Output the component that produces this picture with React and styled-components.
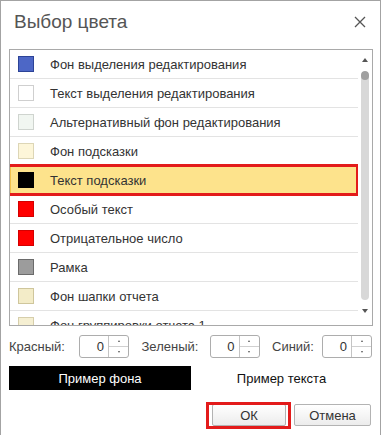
import React from "react";
import styled, { createGlobalStyle } from "styled-components";

const Global = createGlobalStyle`
  html, body { margin: 0; padding: 0; background: #fff; }
  body { font-family: Arial, "Liberation Sans", sans-serif; color: #333; }
`;

const Dialog = styled.div`
  width: 379px;
  height: 434px;
  border: 1px solid #a3a3a3;
  border-bottom: none;
  background: #fff;
  display: flex;
  flex-direction: column;
`;

const Header = styled.div`
  height: 48px;
  display: flex;
  align-items: flex-start;
  justify-content: space-between;
  padding: 0 14px 0 13px;
`;

const Title = styled.div`
  font-size: 19px;
  color: #555;
  margin-top: 10px;
`;

const Close = styled.svg`
  margin-top: 15px;
  width: 12px;
  height: 12px;
`;

const ListBox = styled.div`
  position: relative;
  margin: 0 7px 0 8px;
  height: 275px;
  border: 1px solid #a9a9a9;
  overflow: visible;
  display: flex;
`;

const Rows = styled.div`
  flex: 1;
  height: 275px;
  overflow: hidden;
`;

const Row = styled.div`
  position: relative;
  height: 28px;
  border-bottom: 1px solid #e3e3e3;
  display: flex;
  align-items: center;
  padding-left: 8px;
  font-size: 13px;
  color: #333;
  background: ${(p) => (p.$active ? "#fde38c" : "transparent")};
  box-shadow: ${(p) => (p.$active ? "inset 0 0 0 1px #f2c24a" : "none")};
`;

const Highlight = styled.div`
  position: absolute;
  left: -7px;
  right: -1px;
  top: -2px;
  bottom: -2px;
  border: 3px solid #e31b1b;
  pointer-events: none;
`;

const Swatch = styled.span`
  width: 14px;
  height: 14px;
  border: 1px solid ${(p) => p.$border};
  background: ${(p) => p.$fill};
  margin-right: 16px;
  flex: none;
`;

const Scroll = styled.div`
  width: 14px;
  display: flex;
  flex-direction: column;
  align-items: center;
  padding-top: 8px;
`;

const Arrow = styled.div`
  width: 0;
  height: 0;
  border-left: 3px solid transparent;
  border-right: 3px solid transparent;
  ${(p) =>
    p.$up
      ? "border-bottom: 4px solid #555;"
      : "border-top: 4px solid #555;"}
`;

const Track = styled.div`
  width: 8px;
  height: 229px;
  margin: 9px 0 9px;
  border-radius: 4px;
  background: #d8d8d8;
  overflow: hidden;
`;

const Thumb = styled.div`
  height: 9px;
  border-radius: 4px;
  background: #a0a0a0;
`;

const Controls = styled.div`
  display: flex;
  justify-content: space-between;
  margin: 9px 8px 0 8px;
`;

const Group = styled.div`
  width: ${(p) => p.$w}px;
  display: flex;
  align-items: center;
  justify-content: space-between;
  font-size: 13px;
  color: #444;
`;

const Spin = styled.div`
  width: 48px;
  height: 21px;
  border: 1px solid #adadad;
  border-radius: 3px;
  display: flex;
`;

const SpinValue = styled.div`
  flex: 1;
  text-align: right;
  padding-right: 4px;
  font-size: 13px;
  line-height: 21px;
  color: #333;
  border-right: 1px solid #c4c4c4;
`;

const SpinButtons = styled.div`
  width: 19px;
  display: flex;
  flex-direction: column;
`;

const SpinBtn = styled.div`
  flex: 1;
  display: flex;
  align-items: center;
  justify-content: center;
  & + & { border-top: 1px solid #d0d0d0; }
`;

const Tiny = styled.div`
  width: 0;
  height: 0;
  border-left: 1.5px solid transparent;
  border-right: 1.5px solid transparent;
  ${(p) =>
    p.$up ? "border-bottom: 2px solid #555;" : "border-top: 2px solid #555;"}
`;

const Samples = styled.div`
  display: flex;
  margin: 8px 8px 0 8px;
  height: 24px;
`;

const BgSample = styled.div`
  width: 182px;
  background: #000;
  color: #fff;
  font-size: 13px;
  display: flex;
  align-items: center;
  justify-content: center;
`;

const TextSample = styled.div`
  flex: 1;
  color: #111;
  font-size: 13px;
  display: flex;
  align-items: center;
  justify-content: center;
`;

const Footer = styled.div`
  display: flex;
  justify-content: flex-end;
  gap: 8px;
  margin: 14px 9px 0 0;
`;

const Button = styled.div`
  position: relative;
  width: ${(p) => p.$w}px;
  height: 20px;
  border: 1px solid #b3b3b3;
  border-radius: 2px;
  background: linear-gradient(#ffffff, #ececec);
  font-size: 13px;
  color: #333;
  display: flex;
  align-items: center;
  justify-content: center;
`;

const ButtonMark = styled.div`
  position: absolute;
  left: -7px;
  right: -6px;
  top: -3px;
  bottom: -4px;
  border: 3px solid #e31b1b;
`;

const items = [
  { t: "Фон выделения редактирования", f: "#4d67c6", b: "#2c4397" },
  { t: "Текст выделения редактирования", f: "#fff", b: "#cfcfcf" },
  { t: "Альтернативный фон редактирования", f: "#f1f6f1", b: "#cfd4cf" },
  { t: "Фон подсказки", f: "#fdf6d9", b: "#ddd6b6" },
  { t: "Текст подсказки", f: "#000", b: "#000", active: true },
  { t: "Особый текст", f: "#ff0000", b: "#d40000" },
  { t: "Отрицательное число", f: "#ff0000", b: "#d40000" },
  { t: "Рамка", f: "#9c9c9c", b: "#6b6b6b" },
  { t: "Фон шапки отчета", f: "#f3ecc8", b: "#cfc69c" },
  { t: "Фон группировки отчета 1", f: "#f5efd2", b: "#d6ceab" },
];

const SpinBox = () => (
  <Spin>
    <SpinValue>0</SpinValue>
    <SpinButtons>
      <SpinBtn><Tiny $up /></SpinBtn>
      <SpinBtn><Tiny /></SpinBtn>
    </SpinButtons>
  </Spin>
);

export default function App() {
  return (
    <>
      <Global />
      <Dialog>
        <Header>
          <Title>Выбор цвета</Title>
          <Close viewBox="0 0 12 12">
            <path d="M1 1L11 11M11 1L1 11" stroke="#555" strokeWidth="1.3" />
          </Close>
        </Header>
        <ListBox>
          <Rows>
            {items.map((it) => (
              <Row key={it.t} $active={it.active}>
                <Swatch $fill={it.f} $border={it.b} />
                {it.t}
                {it.active && <Highlight />}
              </Row>
            ))}
          </Rows>
          <Scroll>
            <Arrow $up />
            <Track>
              <Thumb />
            </Track>
            <Arrow />
          </Scroll>
        </ListBox>
        <Controls>
          <Group $w={120}>
            Красный:
            <SpinBox />
          </Group>
          <Group $w={118}>
            Зеленый:
            <SpinBox />
          </Group>
          <Group $w={100}>
            Синий:
            <SpinBox />
          </Group>
        </Controls>
        <Samples>
          <BgSample>Пример фона</BgSample>
          <TextSample>Пример текста</TextSample>
        </Samples>
        <Footer>
          <Button $w={72}>
            ОК
            <ButtonMark />
          </Button>
          <Button $w={75}>Отмена</Button>
        </Footer>
      </Dialog>
    </>
  );
}
